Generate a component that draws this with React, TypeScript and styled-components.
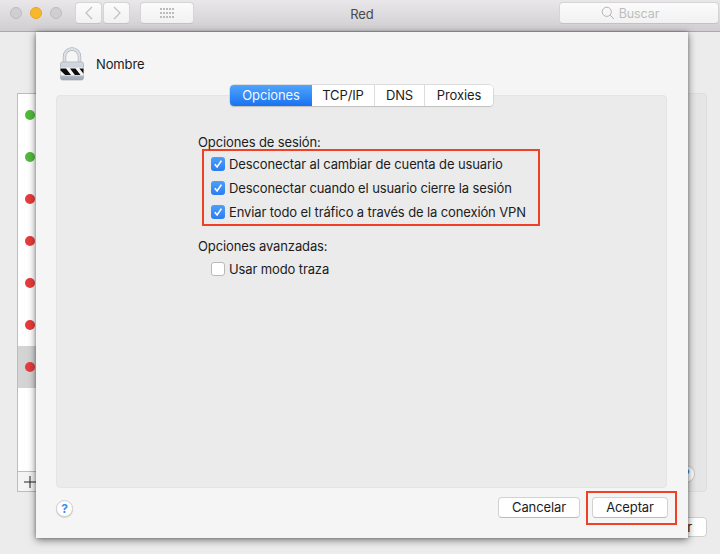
import React from "react";
import styled, { createGlobalStyle } from "styled-components";

const Global = createGlobalStyle`
  * { box-sizing: border-box; }
  html, body { margin: 0; padding: 0; background: #ececec; }
  body { font-family: Inter, "Liberation Sans", sans-serif; font-size: 13px; color: #1c1c1c; letter-spacing: -0.12px; }
`;

const Win = styled.div`
  position: relative; width: 720px; height: 554px; overflow: hidden; background: #ececec;
  display: flex; flex-direction: column;
`;
const TitleBar = styled.header`
  height: 32px; flex: none; display: flex; align-items: flex-start; position: relative;
  padding: 2px 1px 0 10px;
  background: linear-gradient(#e9e7e9, #d0ced0); border-bottom: 1px solid #a9a9a9;
`;
const Lights = styled.div`
  display: flex; gap: 8px; margin: 5px 13px 0 0;
`;
const Light = styled.span<{ $c: string; $b: string }>`
  width: 12px; height: 12px; border-radius: 50%; background: ${p => p.$c}; border: 1px solid ${p => p.$b};
`;
const ToolBtn = styled.div<{ $w: number }>`
  width: ${p => p.$w}px; height: 22px; border-radius: 4px; flex: none;
  background: linear-gradient(#fbfbfb, #f1f1f1); border: 1px solid #d6d4d6; border-bottom-color: #c4c2c4;
  display: flex; align-items: center; justify-content: center; color: #b4b4b4;
`;
const NavGroup = styled.div`
  display: flex; gap: 1px; margin-right: 10px;
`;
const Title = styled.div`
  position: absolute; left: 0; right: 0; top: 6px; text-align: center; color: #4a4a4a; font-size: 13px;
  padding-left: 4px;
`;
const Search = styled(ToolBtn)`
  margin-left: auto; gap: 4px; font-size: 12.5px; color: #bdbdbd; padding-right: 18px;
`;

const Backdrop = styled.div`
  flex: 1; padding: 61px 13px 17px 17px; display: flex; flex-direction: column; align-items: stretch;
`;
const Columns = styled.div`
  display: flex; height: 399px; gap: 12px;
`;
const ListCol = styled.div`
  width: 220px; display: flex; flex-direction: column; border: 1px solid #bdbdbd; background: #fff; flex: none;
`;
const Rows = styled.div`
  flex: 1;
`;
const Row = styled.div<{ $sel?: boolean }>`
  height: 42px; padding-left: 7px; display: flex; align-items: center; background: ${p => (p.$sel ? "#d4d4d4" : "transparent")};
`;
const Dot = styled.span<{ $c: string }>`
  width: 10px; height: 10px; border-radius: 50%; background: ${p => p.$c};
`;
const ListBar = styled.div`
  height: 20px; flex: none; border-top: 1px solid #bdbdbd; background: #f4f4f4; padding-left: 6px;
  display: flex; align-items: center;
`;
const DetailCol = styled.div`
  flex: 1; background: #e6e6e6; border: 1px solid #dedede; border-radius: 4px; position: relative;
  display: flex; justify-content: flex-end; align-items: flex-end; padding: 0 11px 8px 0;
`;
const BackHelp = styled.span`
  width: 18px; height: 18px; border-radius: 50%; background: #fff; border: 1px solid #c4c4c4;
  color: #3d8ff0; font-size: 13px; font-weight: 700; display: flex; align-items: center; justify-content: center;
`;
const BackBtnRow = styled.div`
  display: flex; justify-content: flex-end; margin-top: 25px;
`;
const BackBtn = styled.div`
  width: 90px; height: 20px; background: #fff; border: 1px solid #cfcfcf; border-radius: 4px;
  padding-right: 14px; line-height: 18px; text-align: right;
`;

const Sheet = styled.section`
  position: absolute; left: 36px; top: 32px; width: 652px; height: 506px; background: #f5f5f5;
  box-shadow: 0 2px 8px rgba(0,0,0,.5), 0 0 3px rgba(0,0,0,.25);
  display: flex; flex-direction: column; padding: 16px 21px 0 20px;
`;
const SheetHead = styled.div`
  display: flex; align-items: center; gap: 11px; height: 32px; padding-left: 3px; flex: none;
`;
const TabsWrap = styled.div`
  display: flex; justify-content: center; margin-top: 5px; margin-bottom: -11px; position: relative; z-index: 1; flex: none;
`;
const Tabs = styled.div`
  display: flex; height: 21px; border-radius: 4px; background: #fff; overflow: hidden;
  box-shadow: 0 0 0 .5px #c6c6c6, 0 1px 1px #bdbdbd;
`;
const Tab = styled.div<{ $w: number; $on?: boolean }>`
  width: ${p => p.$w}px; text-align: center; line-height: 21px; font-size: 13px;
  background: ${p => (p.$on ? "linear-gradient(#4ea5fc, #1a72f2)" : "#fff")};
  color: ${p => (p.$on ? "#f2f7ff" : "#1c1c1c")};
  border-left: ${p => (p.$on ? "none" : "1px solid #dcdcdc")};
  &:nth-child(2) { border-left: none; }
`;
const Panel = styled.div`
  height: 393px; flex: none; background: #ebebeb; border: 1px solid #e4e4e4; border-radius: 4px;
  padding: 38px 0 0 141px;
`;
const GroupLabel = styled.div`
  height: 15px; line-height: 16px; font-size: 13px;
`;
const Marked = styled.div`
  width: 338px; height: 77px; margin: 0 0 0 4px; padding: 1px 0 0 7px; border: 2px solid #ee4128;
  display: flex; flex-direction: column;
`;
const Check = styled.label`
  height: 24px; display: flex; align-items: center; gap: 4px; font-size: 13px;
`;
const Box = styled.span<{ $on?: boolean }>`
  width: 14px; height: 14px; border-radius: 3px; flex: none; display: flex; align-items: center; justify-content: center;
  background: ${p => (p.$on ? "linear-gradient(#4d9ffa, #2a7df0)" : "#fff")};
  border: ${p => (p.$on ? "none" : "1px solid #b9b9b9")};
`;
const Advanced = styled.div`
  margin-top: 12px;
`;
const Plain = styled.div`
  padding: 4px 0 0 13px;
`;
const Footer = styled.footer`
  flex: 1; display: flex; align-items: flex-start; justify-content: space-between; padding-top: 12px; padding-right: 0;
`;
const Help = styled.span`
  width: 17px; height: 17px; border-radius: 50%; background: #fff; margin-top: 0;
  border: 1px solid #cfcfcf; box-shadow: 0 1px 1px rgba(0,0,0,.15);
  color: #3d8ff0; font-size: 12px; font-weight: 700; display: flex; align-items: center; justify-content: center;
`;
const Buttons = styled.div`
  display: flex; align-items: flex-start; margin-top: -9px; margin-right: -10px;
`;
const Btn = styled.div<{ $w: number }>`
  width: ${p => p.$w}px; height: 21px; background: #fff; border: 1px solid #d2d2d2; border-bottom-color: #bcbcbc;
  border-radius: 4px; text-align: center; line-height: 19px; font-size: 13px;
`;
const CancelWrap = styled.div`
  padding: 6px 6px 0 0;
`;
const Annot = styled.div`
  width: 91px; height: 34px; border: 2px solid #ee4128; padding: 4px 0 0 4px;
`;

const Lock = () => (
  <svg width="26" height="34" viewBox="0 0 26 34">
    <defs>
      <linearGradient id="lb" x1="0" y1="0" x2="0" y2="1">
        <stop offset="0" stopColor="#d5dbe2" />
        <stop offset=".55" stopColor="#c2c9d1" />
        <stop offset="1" stopColor="#9aa6b2" />
      </linearGradient>
    </defs>
    <path d="M5.5 16V9.5a7.5 7.5 0 0 1 15 0V16" fill="none" stroke="#a9b0b8" strokeWidth="3.4" />
    <path d="M5.5 16V9.5a7.5 7.5 0 0 1 15 0V16" fill="none" stroke="#dfe3e8" strokeWidth="2" />
    <path d="M1.5 17a2 2 0 0 1 2-2h19a2 2 0 0 1 2 2v14a2 2 0 0 1-2 2h-19a2 2 0 0 1-2-2z" fill="url(#lb)" stroke="#a3abb4" strokeWidth=".7" />
    <rect x="1.5" y="20.5" width="23" height="8" fill="#f4f4f4" />
    <path d="M1.5 21.5h5.5l5 6.5H6.2l-4.7-4.5zM11 21.5h5.5l5 6.5h-5.6zM20.4 21.5h4.1v5.2z" fill="#0c0c0c" />
  </svg>
);

const Tick = () => (
  <svg width="10" height="10" viewBox="0 0 10 10">
    <path d="M1.8 5.3 4.1 8 8.4 1.6" fill="none" stroke="#fff" strokeWidth="1.6" />
  </svg>
);

const Chevron = ({ right }: { right?: boolean }) => (
  <svg width="10" height="14" viewBox="0 0 10 14">
    <path d={right ? "M2 1l6 6-6 6" : "M8 1 2 7l6 6"} fill="none" stroke="#c0c0c0" strokeWidth="1.2" />
  </svg>
);

const GridIcon = () => (
  <svg width="15" height="11" viewBox="0 0 15 11" fill="#bcbcbc">
    {[0, 1, 2].flatMap(r =>
      [0, 1, 2, 3, 4].map(c => <rect key={`${r}-${c}`} x={c * 3} y={r * 4} width="2" height="2" />)
    )}
  </svg>
);

const SearchIcon = () => (
  <svg width="14" height="14" viewBox="0 0 14 14" fill="none" stroke="#b4b4b4" strokeWidth="1">
    <circle cx="5.8" cy="5.8" r="4.6" />
    <path d="M9.2 9.2 13 13" />
  </svg>
);

const Plus = () => (
  <svg width="12" height="12" viewBox="0 0 12 12">
    <path d="M6 0v12M0 6h12" stroke="#222" strokeWidth="1" />
  </svg>
);

const dots = ["#52b93a", "#52b93a", "#e63c3c", "#e63c3c", "#e63c3c", "#e63c3c", "#e63c3c"];
const session = [
  "Desconectar al cambiar de cuenta de usuario",
  "Desconectar cuando el usuario cierre la sesión",
  "Enviar todo el tráfico a través de la conexión VPN",
];

export default function App() {
  return (
    <Win>
      <Global />
      <TitleBar>
        <Lights>
          <Light $c="#d0ced0" $b="#bdbbbd" />
          <Light $c="#f8b82e" $b="#e5a626" />
          <Light $c="#d0ced0" $b="#bdbbbd" />
        </Lights>
        <NavGroup>
          <ToolBtn $w={27}><Chevron /></ToolBtn>
          <ToolBtn $w={27}><Chevron right /></ToolBtn>
        </NavGroup>
        <ToolBtn $w={54}><GridIcon /></ToolBtn>
        <Title>Red</Title>
        <Search $w={160}><SearchIcon />Buscar</Search>
      </TitleBar>
      <Backdrop>
        <Columns>
          <ListCol>
            <Rows>
              {dots.map((c, i) => (
                <Row key={i} $sel={i === 6}><Dot $c={c} /></Row>
              ))}
            </Rows>
            <ListBar><Plus /></ListBar>
          </ListCol>
          <DetailCol><BackHelp>?</BackHelp></DetailCol>
        </Columns>
        <BackBtnRow><BackBtn>Aplicar</BackBtn></BackBtnRow>
      </Backdrop>
      <Sheet>
        <SheetHead><Lock />Nombre</SheetHead>
        <TabsWrap>
          <Tabs>
            <Tab $w={82} $on>Opciones</Tab>
            <Tab $w={62}>TCP/IP</Tab>
            <Tab $w={50}>DNS</Tab>
            <Tab $w={69}>Proxies</Tab>
          </Tabs>
        </TabsWrap>
        <Panel>
          <GroupLabel>Opciones de sesión:</GroupLabel>
          <Marked>
            {session.map(s => (
              <Check key={s}><Box $on><Tick /></Box>{s}</Check>
            ))}
          </Marked>
          <Advanced>
            <GroupLabel>Opciones avanzadas:</GroupLabel>
            <Plain><Check><Box />Usar modo traza</Check></Plain>
          </Advanced>
        </Panel>
        <Footer>
          <Help>?</Help>
          <Buttons>
            <CancelWrap><Btn $w={82}>Cancelar</Btn></CancelWrap>
            <Annot><Btn $w={76}>Aceptar</Btn></Annot>
          </Buttons>
        </Footer>
      </Sheet>
    </Win>
  );
}
